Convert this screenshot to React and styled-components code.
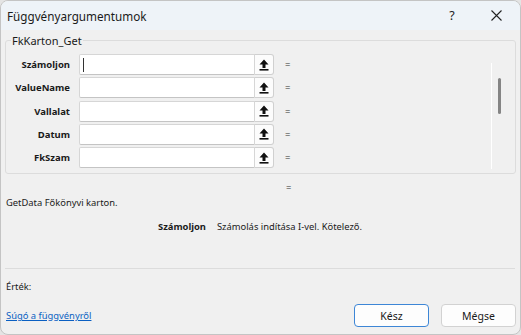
import React from "react";
import styled, { createGlobalStyle } from "styled-components";

const Global = createGlobalStyle`
  html, body { margin: 0; padding: 0; background: #e4e4e4; }
  body { font-family: "Segoe UI", "Noto Sans", "Open Sans", sans-serif; font-size: 9.4px; color: #1a1a1a; }
  * { box-sizing: border-box; }
`;

const Window = styled.div`
  width: 521px;
  height: 335px;
  background: #f0f0f0;
  border: 1px solid #c4c4c4;
  border-radius: 8px;
  overflow: hidden;
  display: flex;
  flex-direction: column;
`;

const TitleBar = styled.div`
  height: 29px;
  flex: none;
  background: #eef3f8;
  display: flex;
  align-items: center;
  padding-left: 6px;
  padding-right: 2px;
`;

const Title = styled.div`
  flex: 1;
  font-size: 11.7px;
  color: #1b1b1b;
`;

const TitleButton = styled.div`
  width: 44px;
  height: 29px;
  display: flex;
  align-items: center;
  justify-content: center;
  font-size: 12.5px;
  color: #222;
`;

const Body = styled.div`
  flex: 1;
  padding: 0 4px 0 4px;
  display: flex;
  flex-direction: column;
`;

const Group = styled.fieldset`
  margin: 3px 0 0 0;
  padding: 6px 0 2px 0;
  border: 1px solid #dcdcdc;
  border-radius: 3px;
  display: flex;
  min-width: 0;
`;

const Legend = styled.legend`
  padding: 0 1px;
  margin-left: 5px;
  font-size: 11px;
  line-height: 15px;
  color: #1a1a1a;
`;

const Rows = styled.div`
  flex: 1;
  display: grid;
  grid-template-columns: 73px 176px 19px auto;
  grid-auto-rows: 21px;
  row-gap: 2.3px;
  align-items: center;
  padding-bottom: 3px;
`;

const Label = styled.div`
  font-weight: 700;
  font-size: 9.5px;
  text-align: right;
  margin-right: 9px;
  white-space: nowrap;
`;

const Input = styled.div`
  height: 21px;
  background: #fff;
  border: 1px solid #d6d6d6;
  border-bottom-color: #c4c4c4;
  border-radius: 2px 0 0 2px;
  display: flex;
  align-items: center;
  padding-left: 3px;
`;

const Caret = styled.span`
  width: 1px;
  height: 14px;
  background: #333;
`;

const RefButton = styled.div`
  height: 21px;
  background: #fcfcfc;
  border: 1px solid #d0d0d0;
  border-left: none;
  border-radius: 0 3px 3px 0;
  display: flex;
  align-items: center;
  justify-content: center;
`;

const Eq = styled.div`
  padding-left: 11px;
  font-size: 9.5px;
  color: #333;
`;

const ScrollTrack = styled.div`
  width: 24px;
  margin: 9px 0 2px 0;
  border-left: 1px solid #ffffff;
  padding: 15px 0 0 6px;
`;

const Thumb = styled.div`
  width: 3px;
  height: 36px;
  background: #858585;
  border-radius: 2px;
`;

const ResultEq = styled.div`
  margin-top: 7px;
  padding-left: 281px;
  color: #333;
  line-height: 14px;
`;

const Description = styled.div`
  line-height: 14px;
  margin-top: 1px;
  padding-left: 1px;
`;

const ArgHelp = styled.div`
  display: flex;
  gap: 11px;
  margin-top: 10px;
  padding-left: 153px;
  line-height: 14px;
`;

const ArgName = styled.span`
  font-weight: 700;
`;

const Separator = styled.div`
  margin-top: 34px;
  height: 1px;
  background: #dcdcdc;
  margin-right: 1px;
`;

const Value = styled.div`
  margin-top: 11px;
  line-height: 14px;
  padding-left: 1px;
`;

const Footer = styled.div`
  margin-top: 10px;
  display: flex;
  align-items: center;
  gap: 12px;
`;

const HelpLink = styled.a`
  flex: 1;
  color: #0a5fc2;
  text-decoration: underline;
  padding-left: 1px;
  cursor: pointer;
`;

const Button = styled.button`
  width: 75px;
  height: 23px;
  font-family: inherit;
  font-size: 10.5px;
  color: #1a1a1a;
  background: #fdfdfd;
  border: 1px solid ${(p) => (p.$primary ? "#3d86d6" : "#d2d2d2")};
  border-radius: 4px;
  padding: 0;
`;

const UploadIcon = () => (
  <svg width="10" height="12" viewBox="0 0 10 12">
    <path d="M5 0.5 L9.5 5.5 L6.5 5.5 L6.5 9 L3.5 9 L3.5 5.5 L0.5 5.5 Z" fill="#111" />
    <rect x="0.5" y="10" width="9" height="1.6" fill="#111" />
  </svg>
);

const CloseIcon = () => (
  <svg width="11" height="11" viewBox="0 0 11 11">
    <path d="M0.5 0.5 L10.5 10.5 M10.5 0.5 L0.5 10.5" stroke="#222" strokeWidth="1.1" />
  </svg>
);

const args = ["Számoljon", "ValueName", "Vallalat", "Datum", "FkSzam"];

export default function App() {
  return (
    <>
      <Global />
      <Window>
        <TitleBar>
          <Title>Függvényargumentumok</Title>
          <TitleButton>?</TitleButton>
          <TitleButton>
            <CloseIcon />
          </TitleButton>
        </TitleBar>
        <Body>
          <Group>
            <Legend>FkKarton_Get</Legend>
            <Rows>
              {args.map((a, i) => (
                <React.Fragment key={a}>
                  <Label>{a}</Label>
                  <Input>{i === 0 && <Caret />}</Input>
                  <RefButton>
                    <UploadIcon />
                  </RefButton>
                  <Eq>=</Eq>
                </React.Fragment>
              ))}
            </Rows>
            <ScrollTrack>
              <Thumb />
            </ScrollTrack>
          </Group>
          <ResultEq>=</ResultEq>
          <Description>GetData Főkönyvi karton.</Description>
          <ArgHelp>
            <ArgName>Számoljon</ArgName>
            <span>Számolás indítása I-vel. Kötelező.</span>
          </ArgHelp>
          <Separator />
          <Value>Érték:</Value>
          <Footer>
            <HelpLink>Súgó a függvényről</HelpLink>
            <Button $primary>Kész</Button>
            <Button>Mégse</Button>
          </Footer>
        </Body>
      </Window>
    </>
  );
}
